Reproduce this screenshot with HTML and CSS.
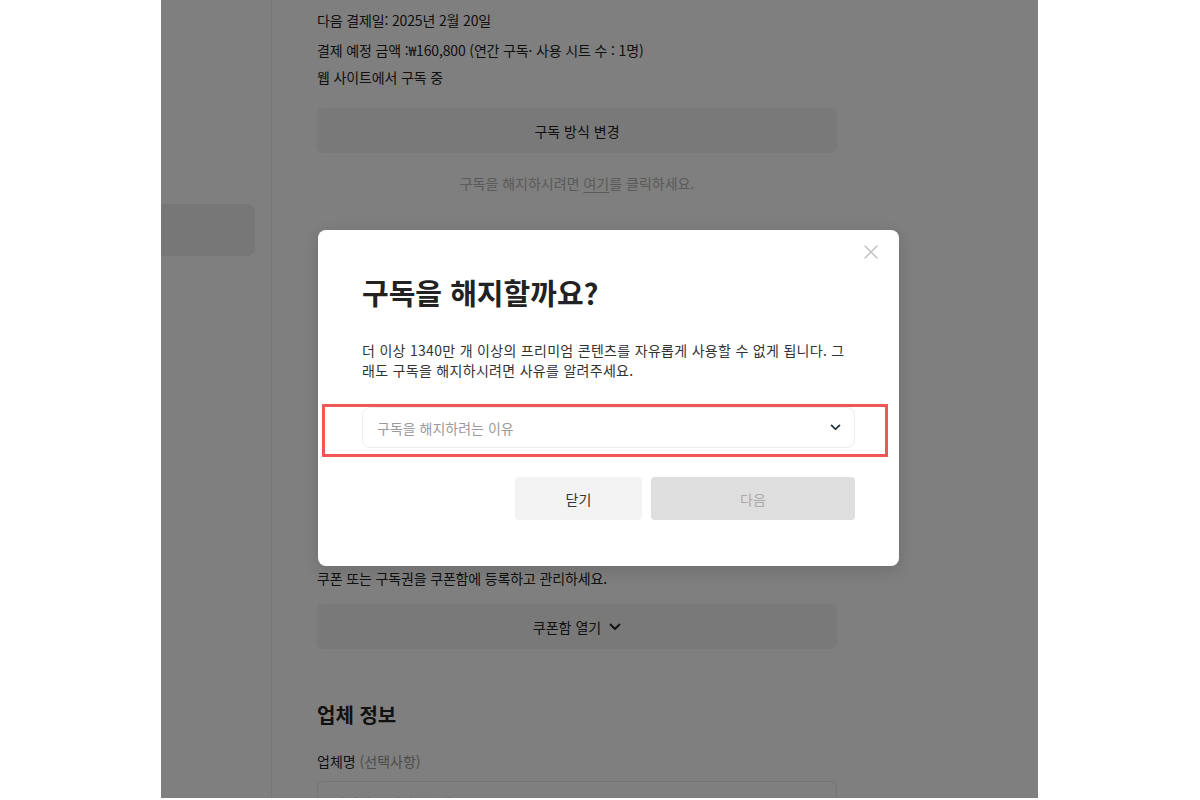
FILE: index.html
```html
<!DOCTYPE html>
<html lang="ko">
<head>
<meta charset="utf-8">
<title>구독 해지</title>
<link rel="stylesheet" href="styles.css">
</head>
<body>
<div class="frame">
  <div class="layout">
    <aside class="sidebar">
      <div class="side-item"></div>
    </aside>
    <main class="main">
      <p class="info first">다음 결제일: 2025년 2월 20일</p>
      <p class="info second">결제 예정 금액 :₩160,800 (연간 구독· 사용 시트 수 : 1명)</p>
      <p class="info third">웹 사이트에서 구독 중</p>
      <button class="gray-btn change-btn">구독 방식 변경</button>
      <p class="cancel-link">구독을 해지하시려면 <u>여기</u>를 클릭하세요.</p>
      <div class="hidden-section"></div>
      <p class="info coupon-text">쿠폰 또는 구독권을 쿠폰함에 등록하고 관리하세요.</p>
      <button class="gray-btn coupon-btn">쿠폰함 열기
        <svg class="chev" width="12" height="8" viewBox="0 0 12 8"><path d="M1.5 1.5 L6 6 L10.5 1.5" fill="none" stroke="#222" stroke-width="1.8" stroke-linecap="round" stroke-linejoin="round"/></svg>
      </button>
      <h2 class="section-title">업체 정보</h2>
      <p class="field-label">업체명 <span class="optional">(선택사항)</span></p>
      <div class="text-input">업체명을 입력해주세요</div>
    </main>
  </div>
  <div class="dim"></div>
  <div class="modal">
    <svg class="close" width="16" height="16" viewBox="0 0 16 16"><path d="M2 2 L14 14 M14 2 L2 14" stroke="#c4c4c4" stroke-width="1.6" stroke-linecap="round"/></svg>
    <h1 class="modal-title">구독을 해지할까요?</h1>
    <p class="modal-text">더 이상 1340만 개 이상의 프리미엄 콘텐츠를 자유롭게 사용할 수 없게 됩니다. 그래도 구독을 해지하시려면 사유를 알려주세요.</p>
    <div class="select">
      <span class="placeholder">구독을 해지하려는 이유</span>
      <svg width="11" height="7" viewBox="0 0 12 8"><path d="M1.5 1.5 L6 6 L10.5 1.5" fill="none" stroke="#1f2a3a" stroke-width="2" stroke-linecap="round" stroke-linejoin="round"/></svg>
    </div>
    <div class="actions">
      <button class="btn btn-close">닫기</button>
      <button class="btn btn-next">다음</button>
    </div>
  </div>
  <div class="highlight"></div>
</div>
</body>
</html>
```

FILE: styles.css
```css
* { box-sizing: border-box; }
html, body {
  margin: 0;
  padding: 0;
  background: #ffffff;
}
body {
  font-family: "Noto Sans CJK KR", "Noto Sans", sans-serif;
  color: #222;
  width: 1200px;
  height: 800px;
  overflow: hidden;
}
.frame {
  position: relative;
  margin-left: 161px;
  width: 877px;
  height: 798px;
  overflow: hidden;
  background: #fff;
}
.layout {
  display: flex;
  height: 100%;
}
.sidebar {
  width: 111px;
  flex: none;
  border-right: 1px solid #ececec;
  padding-top: 204px;
}
.side-item {
  width: 94px;
  height: 52px;
  background: #eeeeee;
  border-radius: 0 8px 8px 0;
}
.main {
  padding-left: 45px;
  width: 565px;
  flex: none;
}
.info {
  margin: 0;
  font-size: 14px;
  line-height: 20px;
  color: #222;
  letter-spacing: -0.15px;
}
.first { margin-top: 10px; }
.second { margin-top: 10px; }
.third { margin-top: 7px; }
.gray-btn {
  display: flex;
  align-items: center;
  justify-content: center;
  gap: 8px;
  width: 520px;
  height: 45px;
  border: none;
  border-radius: 6px;
  background: #f3f3f3;
  font-family: inherit;
  font-size: 14px;
  color: #222;
  font-weight: 400;
}
.change-btn { margin-top: 21px; }
.cancel-link {
  margin: 20px 0 0;
  width: 520px;
  text-align: center;
  font-size: 14px;
  line-height: 20px;
  color: #b4b4b4;
}
.cancel-link u { text-underline-offset: 3px; }
.hidden-section { height: 375px; }
.coupon-text { margin-top: 0; }
.coupon-btn { margin-top: 16px; }
.chev { margin-top: 1px; }
.section-title {
  margin: 51px 0 0;
  font-size: 20px;
  line-height: 30px;
  font-weight: 700;
  color: #222;
}
.field-label {
  margin: 21px 0 0;
  font-size: 14px;
  line-height: 20px;
  font-weight: 400;
  color: #222;
}
.optional { color: #999; }
.text-input {
  margin-top: 10px;
  width: 520px;
  height: 46px;
  border: 1px solid #e6e6e6;
  border-radius: 6px;
  padding: 11px 14px;
  font-size: 14px;
  line-height: 20px;
  color: #bbb;
}
.dim {
  position: absolute;
  inset: 0;
  background: rgba(0, 0, 0, 0.5);
}
.modal {
  position: absolute;
  left: 157px;
  top: 230px;
  width: 581px;
  height: 336px;
  background: #fff;
  border-radius: 8px;
  padding: 44px 44px 46px;
  box-shadow: 0 4px 16px rgba(0, 0, 0, 0.15);
}
.close {
  position: absolute;
  top: 14px;
  right: 20px;
}
.modal-title {
  margin: 0;
  font-size: 29px;
  line-height: 36px;
  font-weight: 700;
  color: #222;
}
.modal-text {
  margin: 30px 0 0;
  font-size: 14px;
  line-height: 20px;
  color: #333;
  letter-spacing: 0.3px;
  word-break: break-all;
}
.select {
  margin-top: 27px;
  height: 41px;
  border: 1px solid #ededed;
  border-radius: 8px;
  padding: 0 13px 0 14px;
  display: flex;
  align-items: center;
  justify-content: space-between;
}
.placeholder {
  font-size: 14px;
  color: #9a9a9a;
}
.actions {
  margin-top: 29px;
  display: flex;
  justify-content: flex-end;
  gap: 9px;
}
.btn {
  height: 43px;
  border: none;
  border-radius: 4px;
  font-family: inherit;
  font-size: 14px;
}
.btn-close {
  width: 127px;
  background: #f3f3f3;
  color: #333;
}
.btn-next {
  width: 204px;
  background: #dedede;
  color: #aaa;
}
.highlight {
  position: absolute;
  left: 161px;
  top: 404px;
  width: 566px;
  height: 53px;
  border: 3px solid #f25656;
}
```
